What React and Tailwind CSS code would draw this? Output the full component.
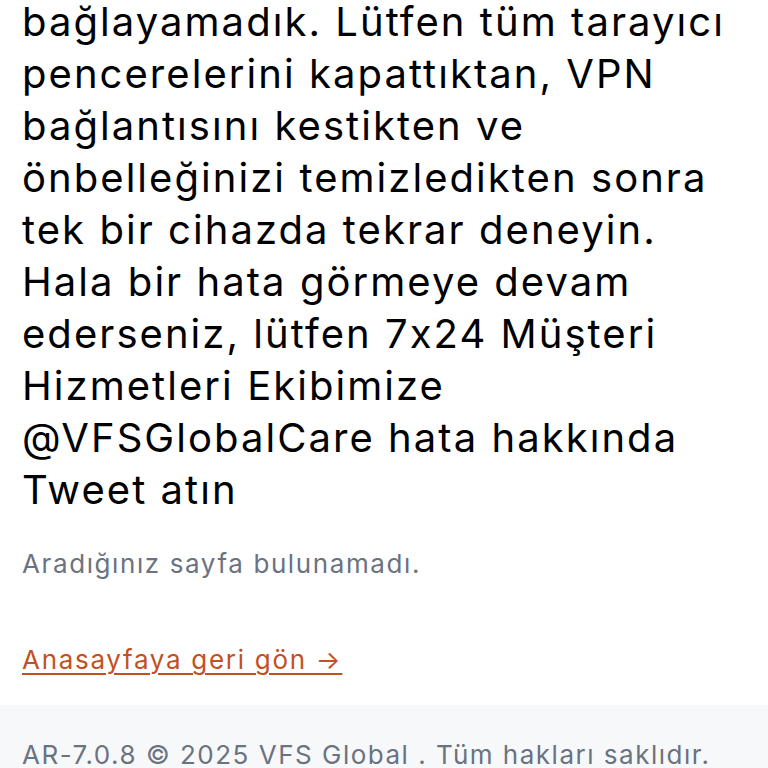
export default function App() {
  return (
    <div className="w-[768px] h-[768px] overflow-hidden bg-white [font-feature-settings:'calt'_0]" style={{ fontFamily: 'Inter, "Noto Sans", sans-serif' }}>
      <div className="px-[22px]">
        <p className="-mt-[4px] text-[40px] leading-[52px] tracking-[2.05px] text-black">
          bağlayamadık. Lütfen tüm tarayıcı pencerelerini kapattıktan, VPN bağlantısını kestikten ve önbelleğinizi temizledikten sonra tek bir cihazda tekrar deneyin. Hala bir hata görmeye devam ederseniz, lütfen 7x24 Müşteri Hizmetleri Ekibimize @VFSGlobalCare hata hakkında Tweet atın
        </p>
        <p className="mt-[28px] text-[26px] leading-[40px] tracking-[1.6px] text-[#6b7280]">Aradığınız sayfa bulunamadı.</p>
        <div className="mt-[56px] h-[40px]">
          <a href="#" className="text-[26px] leading-[40px] tracking-[1.7px] text-[#c2511f] underline underline-offset-[4px] decoration-[2px]">
            Anasayfaya geri gön →
          </a>
        </div>
      </div>
      <div className="mt-[25px] bg-[#f7f8fa] px-[22px] pt-[30px] h-[100px]">
        <p className="text-[26px] leading-[40px] tracking-[1.5px] text-[#6b7280] whitespace-nowrap">AR-7.0.8 © 2025 VFS Global . Tüm hakları saklıdır.</p>
      </div>
    </div>
  );
}
